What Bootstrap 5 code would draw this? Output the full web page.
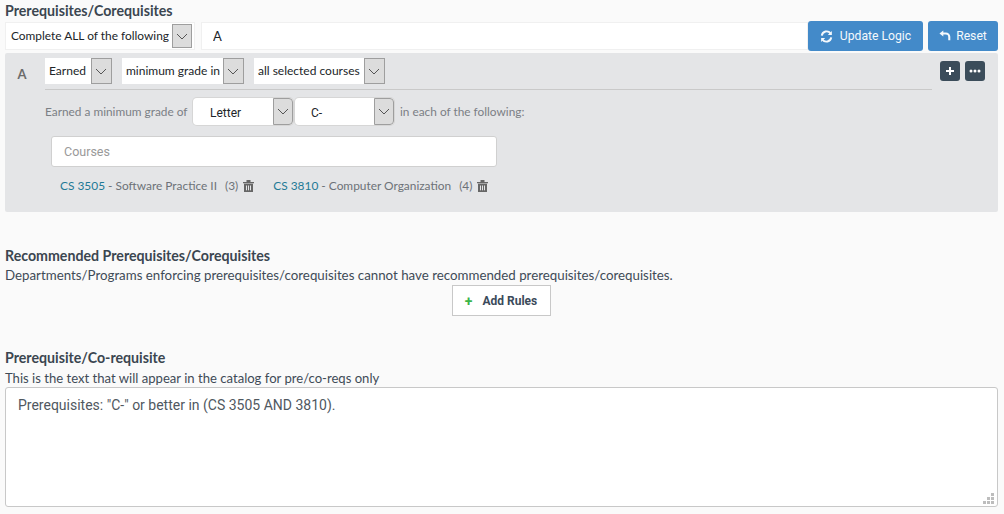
<!DOCTYPE html>
<html lang="en">
<head>
<meta charset="utf-8">
<title>Prerequisites</title>
<link href="https://cdn.jsdelivr.net/npm/bootstrap@5.3.0/dist/css/bootstrap.min.css" rel="stylesheet">
<style>
html,body{height:514px;overflow:hidden}
body{background:#fafafa;font-family:"Lato","Liberation Sans",sans-serif;font-size:14px;color:#3d4a57;line-height:20px}
.page-wrap{padding:1px 6px 0 5px}
.sec-title{font-weight:700;font-size:14.2px;line-height:20px;color:#3b4650;margin:0}
.sec-note{font-size:13.3px;line-height:18px;color:#3f4b57;margin:0}
.sec-note-small{font-size:13.1px;margin-top:1px}
.top-row{height:30px}
.sel{display:inline-flex;align-items:stretch;background:#fff;color:#212529;font-size:12px}
.sel-text{display:flex;align-items:center;white-space:nowrap;flex:1 1 auto}
.sel-caret{display:flex;align-items:center;justify-content:center;background:#dcdcdc;border:1px solid #9e9e9e;flex:none}
.sel-top{height:28px;border:1px solid #f0f0f0;padding:1px;margin-right:6px;flex:none}
.sel-top .sel-text{padding:0 0 0 4px;width:165px;font-size:11.9px}
.sel-top .sel-caret{width:20px;margin-right:1px}
.sel-rule{height:26px}
.sel-rule .sel-text{padding:0 4px}
.sel-rule .sel-caret{width:21px}
.sel-rule .sel-text.pad-wide{padding-right:5px}
.sel-rule .sel-text.pad-tight{padding-right:3px}
.sel-grade{height:27px;border-radius:4px;width:100px;font-family:"Roboto","Liberation Sans",sans-serif;font-size:12px;box-shadow:0 0 0 1px #d6d6d6;flex:none}
.sel-grade .sel-text{padding:2px 0 0 17px}
.sel-grade .sel-caret{width:20px;border-radius:0 4px 4px 0}
.sel-grade-next{margin-left:2px;width:99px}
.sel-grade-next .sel-text{padding-left:16px}
.logic-input{flex:1 1 auto;height:28px;border:1px solid #f0f0f0;background:#fff;padding:0 11px;font-size:13px;color:#212529;border-radius:0;min-width:0}
.act-btn{font-family:"Roboto","Liberation Sans",sans-serif;font-size:12.2px;background:#438ac9;border:0;color:#f4f8fc;height:30px;border-radius:3px;padding:0;display:flex;align-items:center;justify-content:center;gap:5px}
.act-update{width:115px;gap:7px}
.act-reset{width:70px;margin-left:5px}
.rule-panel{background:#e4e5e7;height:159px;margin-top:2px;border-radius:2px;padding:5px 6px 0 0}
.rule-letter{width:40px;padding:6px 6px 0 0;text-align:center;font-weight:700;font-size:13px;color:#6b6b6b}
.rule-head{width:887px;height:32px;border-bottom:1px solid #c9c9c9;gap:10px}
.mini-btn{width:20px;height:20px;background:#3b4c5a;border:0;border-radius:3px;padding:0;display:flex;align-items:center;justify-content:center}
.mini-row{margin-left:8px;margin-top:3px;gap:5px}
.grade-row{margin:7px 0 0 40px;height:29px;color:#7b7f85;font-size:11.85px}
.grade-lead{width:148px;flex:none;white-space:nowrap}
.grade-tail{margin-left:6px}
.course-input{display:block;width:446px;height:31px;margin:10px 0 0 46px;border:1px solid #d0d0d0;border-radius:3px;background:#fff;padding:0 12px;font-size:12.5px;font-family:"Roboto","Liberation Sans",sans-serif;color:#212529}
.course-input::placeholder{color:#999;opacity:1}
.course-list{margin:10px 0 0 55px;font-size:11.9px;color:#6d7278;line-height:18px;gap:19px}
.course-item{display:inline-flex;align-items:center;white-space:nowrap}
.course-link{color:#1f7a96;text-decoration:none}
.course-num{margin-left:8px;margin-right:5px}
.add-btn{width:99px;height:31px;background:#fff;border:1px solid #c8c8c8;border-radius:0;font-family:"Roboto","Liberation Sans",sans-serif;font-size:12px;font-weight:700;color:#3b4a5a;padding:0;display:flex;align-items:center;justify-content:center;gap:10px}
.add-plus{color:#3cb54a;font-size:14px;font-weight:700;line-height:1}
.add-row{padding-right:1px;margin-top:1px}
.catalog-wrap{position:relative}
.catalog-text{display:block;width:100%;height:120px;border:1px solid #c8c8c8;border-radius:3px;background:#fff;padding:7px 12px;font-family:"Roboto","Liberation Sans",sans-serif;font-size:14px;line-height:20px;color:#50585f;resize:none}
.grip{position:absolute;right:4px;bottom:3px}
.gap-a{height:34px}
.gap-b{height:32px}
</style>
</head>
<body>
<div class="page-wrap">
  <h2 class="sec-title">Prerequisites/Corequisites</h2>
  <div class="top-row d-flex align-items-center">
    <div class="sel sel-top">
      <span class="sel-text">Complete ALL of the following</span>
      <span class="sel-caret"><svg width="12" height="7" viewBox="0 0 12 7"><path d="M1 1l5 5 5-5" fill="none" stroke="#555"/></svg></span>
    </div>
    <input class="logic-input" type="text" value="A" aria-label="Logic">
    <button class="act-btn act-update" type="button"><svg width="13" height="13" viewBox="0 0 16 16"><path d="M2.2 7A6 6 0 0 1 13 4.2M13.8 9A6 6 0 0 1 3 11.8" fill="none" stroke="#f4f8fc" stroke-width="2.4"/><path d="M14.6 1.2v5h-5zM1.4 14.8v-5h5z" fill="#f4f8fc"/></svg><span>Update Logic</span></button>
    <button class="act-btn act-reset" type="button"><svg width="12" height="12" viewBox="0 0 14 14"><path d="M4 4h4a4 4 0 0 1 4 4v4" fill="none" stroke="#f4f8fc" stroke-width="2.4"/><path d="M5 .5v7L.5 4z" fill="#f4f8fc"/></svg><span>Reset</span></button>
  </div>
  <div class="rule-panel">
    <div class="d-flex align-items-start">
      <div class="rule-letter">A</div>
      <div class="rule-head d-flex align-items-start">
        <div class="sel sel-rule"><span class="sel-text pad-wide">Earned</span><span class="sel-caret"><svg width="12" height="7" viewBox="0 0 12 7"><path d="M1 1l5 5 5-5" fill="none" stroke="#555"/></svg></span></div>
        <div class="sel sel-rule"><span class="sel-text pad-tight">minimum grade in</span><span class="sel-caret"><svg width="12" height="7" viewBox="0 0 12 7"><path d="M1 1l5 5 5-5" fill="none" stroke="#555"/></svg></span></div>
        <div class="sel sel-rule"><span class="sel-text">all selected courses</span><span class="sel-caret"><svg width="12" height="7" viewBox="0 0 12 7"><path d="M1 1l5 5 5-5" fill="none" stroke="#555"/></svg></span></div>
      </div>
      <div class="mini-row d-flex">
        <button class="mini-btn" type="button" aria-label="Add"><svg width="10" height="10" viewBox="0 0 10 10"><path d="M5 1v8M1 5h8" stroke="#fff" stroke-width="2"/></svg></button>
        <button class="mini-btn" type="button" aria-label="More"><svg width="12" height="4" viewBox="0 0 12 4"><circle cx="2" cy="2" r="1.5" fill="#fff"/><circle cx="6" cy="2" r="1.5" fill="#fff"/><circle cx="10" cy="2" r="1.5" fill="#fff"/></svg></button>
      </div>
    </div>
    <div class="grade-row d-flex align-items-center">
      <span class="grade-lead">Earned a minimum grade of</span>
      <div class="sel sel-grade"><span class="sel-text">Letter</span><span class="sel-caret"><svg width="12" height="7" viewBox="0 0 12 7"><path d="M1 1l5 5 5-5" fill="none" stroke="#555"/></svg></span></div>
      <div class="sel sel-grade sel-grade-next"><span class="sel-text">C-</span><span class="sel-caret"><svg width="12" height="7" viewBox="0 0 12 7"><path d="M1 1l5 5 5-5" fill="none" stroke="#555"/></svg></span></div>
      <span class="grade-tail">in each of the following:</span>
    </div>
    <input class="course-input" type="text" placeholder="Courses" aria-label="Courses">
    <div class="course-list d-flex">
      <span class="course-item"><a class="course-link" href="#">CS 3505</a>&nbsp;- Software Practice II<span class="course-num">(3)</span><svg width="11" height="12" viewBox="0 0 11 12"><path d="M0 2h11v1.2H0zM3.5 0h4v2h-4zM1 3.8h9V12H1z" fill="#666"/><path d="M3.5 5.5v4.8M5.5 5.5v4.8M7.5 5.5v4.8" stroke="#e4e5e7"/></svg></span>
      <span class="course-item"><a class="course-link" href="#">CS 3810</a>&nbsp;- Computer Organization<span class="course-num">(4)</span><svg width="11" height="12" viewBox="0 0 11 12"><path d="M0 2h11v1.2H0zM3.5 0h4v2h-4zM1 3.8h9V12H1z" fill="#666"/><path d="M3.5 5.5v4.8M5.5 5.5v4.8M7.5 5.5v4.8" stroke="#e4e5e7"/></svg></span>
    </div>
  </div>
  <div class="gap-a"></div>
  <h2 class="sec-title">Recommended Prerequisites/Corequisites</h2>
  <p class="sec-note">Departments/Programs enforcing prerequisites/corequisites cannot have recommended prerequisites/corequisites.</p>
  <div class="add-row d-flex justify-content-center">
    <button class="add-btn" type="button"><span class="add-plus">+</span><span>Add Rules</span></button>
  </div>
  <div class="gap-b"></div>
  <h2 class="sec-title">Prerequisite/Co-requisite</h2>
  <p class="sec-note sec-note-small">This is the text that will appear in the catalog for pre/co-reqs only</p>
  <div class="catalog-wrap">
    <textarea class="catalog-text" aria-label="Catalog text">Prerequisites: "C-" or better in (CS 3505 AND 3810).</textarea>
    <svg class="grip" width="11" height="11" viewBox="0 0 11 11" fill="#bdbdbd"><rect x="8" y="0" width="3" height="3"/><rect x="4" y="4" width="3" height="3"/><rect x="8" y="4" width="3" height="3"/><rect x="0" y="8" width="3" height="3"/><rect x="4" y="8" width="3" height="3"/><rect x="8" y="8" width="3" height="3"/></svg>
  </div>
</div>
<script src="https://cdn.jsdelivr.net/npm/bootstrap@5.3.0/dist/js/bootstrap.bundle.min.js"></script>
</body>
</html>
